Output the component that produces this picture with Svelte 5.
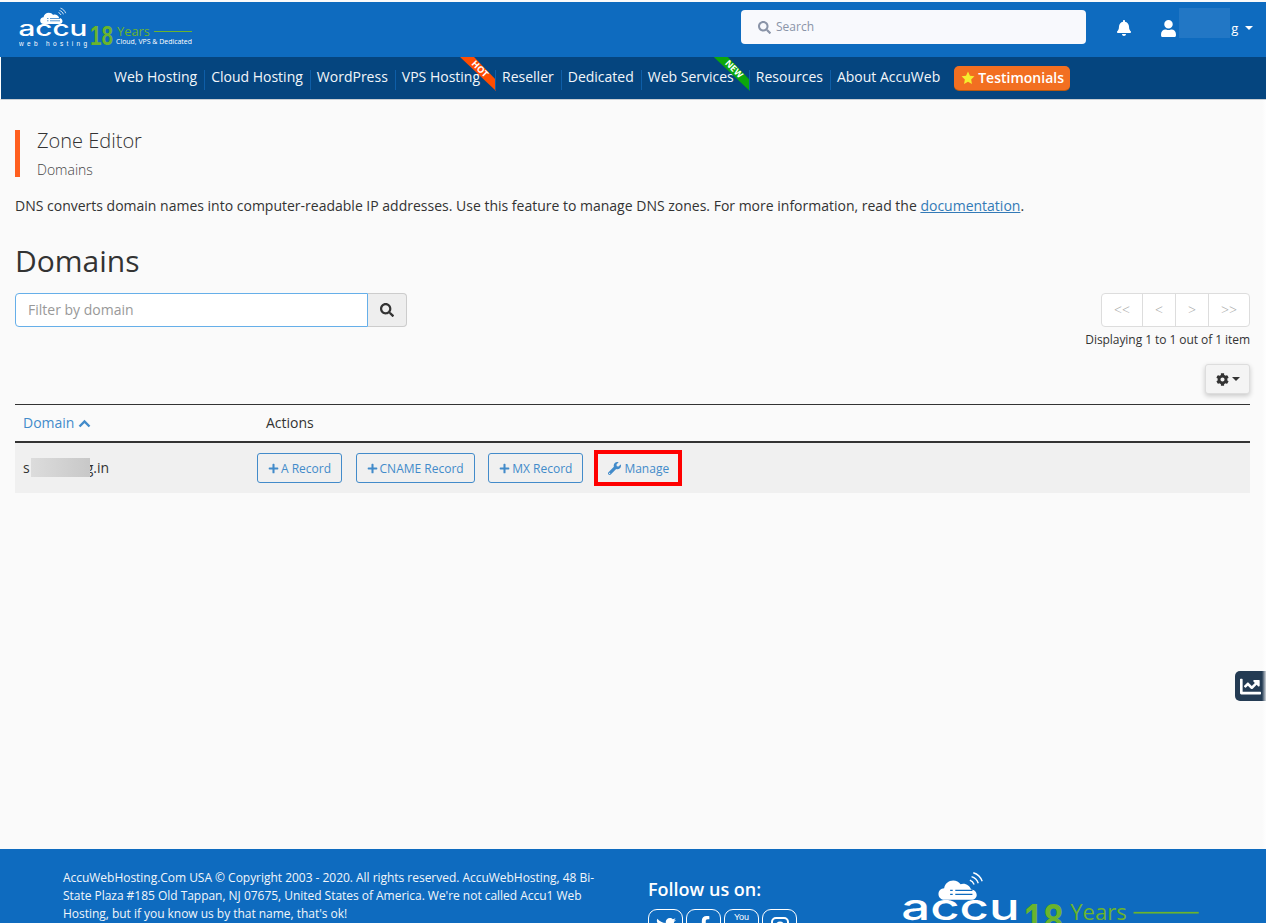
<script>
const navItems = [
	{ label: 'Web Hosting' },
	{ label: 'Cloud Hosting' },
	{ label: 'WordPress' },
	{ label: 'VPS Hosting', ribbon: 'HOT' },
	{ label: 'Reseller' },
	{ label: 'Dedicated' },
	{ label: 'Web Services', ribbon: 'NEW' },
	{ label: 'Resources' },
	{ label: 'About AccuWeb' },
];

const pages = ['<<', '<', '>', '>>'];
const records = ['A Record', 'CNAME Record', 'MX Record'];

const icons = {
	search: ['0 0 512 512', 'M505 442.7L405.3 343c-4.5-4.5-10.6-7-17-7H372c27.6-35.3 44-79.7 44-128C416 93.1 322.9 0 208 0S0 93.1 0 208s93.1 208 208 208c48.3 0 92.7-16.4 128-44v16.3c0 6.4 2.5 12.5 7 17l99.7 99.7c9.4 9.4 24.6 9.4 33.9 0l28.3-28.3c9.4-9.4 9.4-24.6.1-34zM208 336c-70.7 0-128-57.2-128-128 0-70.7 57.2-128 128-128 70.7 0 128 57.2 128 128 0 70.7-57.2 128-128 128z'],
	bell: ['0 0 448 512', 'M224 512c35.32 0 63.97-28.65 63.97-64H160.03c0 35.35 28.65 64 63.97 64zm215.39-149.71c-19.32-20.76-55.47-51.99-55.47-154.29 0-77.7-54.48-139.9-127.94-155.16V32c0-17.67-14.32-32-31.98-32s-31.98 14.33-31.98 32v20.84C118.56 68.1 64.08 130.3 64.08 208c0 102.3-36.15 133.53-55.47 154.29-6 6.45-8.66 14.16-8.61 21.71.11 16.4 12.98 32 32.1 32h383.8c19.12 0 32-15.6 32.1-32 .05-7.55-2.61-15.27-8.61-21.71z'],
	user: ['0 0 448 512', 'M224 256c70.7 0 128-57.3 128-128S294.7 0 224 0 96 57.3 96 128s57.3 128 128 128zm89.6 32h-16.7c-22.2 10.2-46.9 16-72.9 16s-50.6-5.8-72.9-16h-16.7C60.2 288 0 348.2 0 422.4V464c0 26.5 21.5 48 48 48h352c26.5 0 48-21.5 48-48v-41.6c0-74.2-60.2-134.4-134.4-134.4z'],
	star: ['0 0 24 24', 'M12 1l3.4 7.2 7.6 1-5.6 5.4 1.4 7.8L12 18.6l-6.8 3.8 1.4-7.8L1 9.2l7.6-1z'],
	plus: ['0 0 448 512', 'M416 208H272V64c0-17.67-14.33-32-32-32h-32c-17.67 0-32 14.33-32 32v144H32c-17.67 0-32 14.33-32 32v32c0 17.67 14.33 32 32 32h144v144c0 17.67 14.33 32 32 32h32c17.67 0 32-14.33 32-32V304h144c17.67 0 32-14.33 32-32v-32c0-17.67-14.33-32-32-32z'],
	wrench: ['0 0 512 512', 'M507.73 109.1c-2.24-9.03-13.54-12.09-20.12-5.51l-74.36 74.36-67.88-11.31-11.31-67.88 74.36-74.36c6.62-6.62 3.43-17.9-5.66-20.16-47.38-11.74-99.55.91-136.58 37.93-39.64 39.64-50.55 97.1-34.05 147.2L18.74 402.76c-24.99 24.99-24.99 65.51 0 90.5 24.99 24.99 65.51 24.99 90.5 0l213.21-213.21c50.12 16.71 107.47 5.68 147.37-34.22 37.07-37.07 49.7-89.32 37.91-136.73zM64 472c-13.25 0-24-10.75-24-24 0-13.26 10.75-24 24-24s24 10.74 24 24c0 13.25-10.75 24-24 24z'],
	cog: ['0 0 512 512', 'M487.4 315.7l-42.6-24.6c4.3-23.2 4.3-47 0-70.2l42.6-24.6c4.9-2.8 7.1-8.6 5.5-14-11.1-35.6-30-67.8-54.7-94.6-3.8-4.1-10-5.1-14.8-2.3L380.8 110c-17.9-15.4-38.5-27.3-60.8-35.1V25.8c0-5.6-3.9-10.5-9.4-11.7-36.7-8.2-74.3-7.8-109.2 0-5.5 1.2-9.4 6.1-9.4 11.7V75c-22.2 7.9-42.8 19.8-60.8 35.1L88.7 85.5c-4.9-2.8-11-1.9-14.8 2.3-24.7 26.7-43.6 58.9-54.7 94.6-1.7 5.4.6 11.2 5.5 14L67.3 221c-4.3 23.2-4.3 47 0 70.2l-42.6 24.6c-4.9 2.8-7.1 8.6-5.5 14 11.1 35.6 30 67.8 54.7 94.6 3.8 4.1 10 5.1 14.8 2.3l42.6-24.6c17.9 15.4 38.5 27.3 60.8 35.1v49.2c0 5.6 3.9 10.5 9.4 11.7 36.7 8.2 74.3 7.8 109.2 0 5.5-1.2 9.4-6.1 9.4-11.7v-49.2c22.2-7.9 42.8-19.8 60.8-35.1l42.6 24.6c4.9 2.8 11 1.9 14.8-2.3 24.7-26.7 43.6-58.9 54.7-94.6 1.5-5.5-.7-11.3-5.6-14.1zM256 336c-44.1 0-80-35.9-80-80s35.9-80 80-80 80 35.9 80 80-35.9 80-80 80z'],
	chart: ['0 0 512 512', 'M496 384H64V80c0-8.84-7.16-16-16-16H16C7.16 64 0 71.16 0 80v336c0 17.67 14.33 32 32 32h464c8.84 0 16-7.16 16-16v-32c0-8.84-7.16-16-16-16zM464 96H345.94c-21.38 0-32.09 25.85-16.97 40.97l32.4 32.4L288 242.75l-73.37-73.37c-12.5-12.5-32.76-12.5-45.25 0l-68.69 68.69c-6.25 6.25-6.25 16.38 0 22.63l22.62 22.62c6.25 6.25 16.38 6.25 22.63 0L192 237.25l73.37 73.37c12.5 12.5 32.76 12.5 45.25 0l96-96 32.4 32.4c15.12 15.12 40.97 4.41 40.97-16.97V112c.01-8.84-7.15-16-15.99-16z'],
	twitter: ['0 0 512 512', 'M459.37 151.716c.325 4.548.325 9.097.325 13.645 0 138.72-105.583 298.558-298.558 298.558-59.452 0-114.68-17.219-161.137-47.106 8.447.974 16.568 1.299 25.34 1.299 49.055 0 94.213-16.568 130.274-44.832-46.132-.975-84.792-31.188-98.112-72.772 6.498.974 12.995 1.624 19.818 1.624 9.421 0 18.843-1.3 27.614-3.573-48.081-9.747-84.143-51.98-84.143-102.985v-1.299c13.969 7.797 30.214 12.67 47.431 13.319-28.264-18.843-46.781-51.005-46.781-87.391 0-19.492 5.197-37.36 14.294-52.954 51.655 63.675 129.3 105.258 216.365 109.807-1.624-7.797-2.599-15.918-2.599-24.04 0-57.828 46.782-104.934 104.934-104.934 30.213 0 57.502 12.67 76.67 33.137 23.715-4.548 46.456-13.32 66.599-25.34-7.798 24.366-24.366 44.833-46.132 57.827 21.117-2.273 41.584-8.122 60.426-16.243-14.292 20.791-32.161 39.308-52.628 54.253z'],
	facebook: ['0 0 320 512', 'M279.14 288l14.22-92.66h-88.91v-60.13c0-25.35 12.42-50.06 52.24-50.06h40.42V6.26S260.43 0 225.36 0c-73.22 0-121.08 44.38-121.08 124.72v70.62H22.89V288h81.39v224h100.17V288z'],
};
</script>

{#snippet icon(name, size, cls = '')}
	<svg class="ico {cls}" width={size} height={size} viewBox={icons[name][0]} fill="currentColor"><path d={icons[name][1]} /></svg>
{/snippet}

{#snippet logo(width, height)}
	<svg {width} {height} viewBox="0 0 176 42">
		<path d="M25 18c-2.600 0-3.800-1.700-3.800-3.300 0-1.900 1.400-3.300 3.300-3.400 .3-2.800 2.700-4.600 5.300-4.600 1.800 0 3.300 .8 4.300 2.200 .4-.2 1-.3 1.500-.3 2.200 0 4 1.400 4.600 3.400 2 .1 3.300 1.500 3.300 3.200 0 1.400-1.100 2.800-3.100 2.800z" fill="#fff" />
		<path d="M28 12.500h1.500M31 12.500h10M28 14.800h1.500M31 14.800h10" stroke="#0e6bbf" stroke-width=".7" fill="none" />
		<path d="M39.500 6.500c1 .4 2 1.300 2.500 2.500M40.500 4.500c2 .6 3.300 2 3.900 3.800M41.500 2.200c2.600 .8 4.400 2.700 5.200 5" stroke="#fff" stroke-width=".8" fill="none" />
		<text x="-0.500" y="30" textLength="69" lengthAdjust="spacingAndGlyphs" class="accu">accu</text>
		<text x="0" y="39.500" textLength="68" class="web">web hosting</text>
		<text x="71" y="39" textLength="23" lengthAdjust="spacingAndGlyphs" class="eighteen">18</text>
		<text x="98" y="30" textLength="33" lengthAdjust="spacingAndGlyphs" class="years">Years</text>
		<rect x="135" y="25" width="38" height="1" fill="#6ab42d" />
		<text x="97" y="38" textLength="76" lengthAdjust="spacingAndGlyphs" class="tagline">Cloud, VPS &amp; Dedicated</text>
	</svg>
{/snippet}

<div class="page">
	<header class="top">
		<div class="logo-wrap">{@render logo(176, 42)}</div>
		<div class="search">
			{@render icon('search', 13)}
			<span>Search</span>
		</div>
		<span class="bell">{@render icon('bell', 16)}</span>
		<div class="user">
			{@render icon('user', 17)}
			<span class="user-name">s<span class="gap"></span>g</span>
			<span class="caret"></span>
			<span class="user-blur"></span>
		</div>
	</header>

	<nav class="nav">
		{#each navItems as item, i}
			<a class="nav-item" class:ribboned={item.ribbon} class:last={i === navItems.length - 1} href="#top">
				{item.label}
				{#if item.ribbon}
					<span class="ribbon" class:hot={item.ribbon === 'HOT'} class:fresh={item.ribbon === 'NEW'}>
						<b>{item.ribbon}</b>
					</span>
				{/if}
			</a>
		{/each}
		<a class="testimonials" href="#top">{@render icon('star', 14)}Testimonials</a>
	</nav>

	<main class="content">
		<div class="page-title">
			<h2>Zone Editor</h2>
			<p>Domains</p>
		</div>
		<p class="intro">
			DNS converts domain names into computer-readable IP addresses. Use this feature to manage DNS zones. For more information, read the <a href="#top">documentation</a>.
		</p>
		<h1>Domains</h1>

		<div class="toolbar">
			<div class="filter">
				<div class="filter-input">Filter by domain</div>
				<button class="filter-btn">{@render icon('search', 14)}</button>
			</div>
			<div class="paging">
				<div class="pager">
					{#each pages as p}
						<span>{p}</span>
					{/each}
				</div>
				<div class="count">Displaying 1 to 1 out of 1 item</div>
			</div>
		</div>

		<div class="settings-row">
			<button class="settings">{@render icon('cog', 13)}<span class="caret dark"></span></button>
		</div>

		<div class="table">
			<div class="thead">
				<div class="col-domain sort">
					Domain
					<svg width="13" height="9" viewBox="0 0 13 9"><path d="M1.500 7.500l5-5 5 5" fill="none" stroke="currentColor" stroke-width="2.400" /></svg>
				</div>
				<div class="col-actions">Actions</div>
			</div>
			<div class="trow">
				<div class="col-domain cell">s<span class="domain-blur"></span>g.in</div>
				<div class="buttons">
					{#each records as r}
						<button class="rec">{@render icon('plus', 11)}{r}</button>
					{/each}
					<button class="rec manage">{@render icon('wrench', 13)}Manage</button>
				</div>
			</div>
		</div>
	</main>

	<footer class="footer">
		<p class="legal">AccuWebHosting.Com USA © Copyright 2003 - 2020. All rights reserved. AccuWebHosting, 48 Bi-State Plaza #185 Old Tappan, NJ 07675, United States of America. We're not called Accu1 Web Hosting, but if you know us by that name, that's ok!</p>
		<div class="follow">
			<h3>Follow us on:</h3>
			<div class="social">
				<span>{@render icon('twitter', 20)}</span>
				<span>{@render icon('facebook', 20)}</span>
				<span class="yt">You</span>
				<span>
					<svg width="20" height="20" viewBox="0 0 20 20" fill="none" stroke="currentColor" stroke-width="2"><rect x="2" y="2" width="16" height="16" rx="4" /><circle cx="10" cy="10" r="3.500" /></svg>
				</span>
			</div>
		</div>
		<div class="footer-logo">{@render logo(302, 72)}</div>
	</footer>

	<button class="side-tab" aria-label="Stats">{@render icon('chart', 21)}</button>
	<div class="edge"></div>
</div>

<style>
	:global(body) {
		margin: 0;
		overflow: hidden;
		background: #fafafa;
	}

	.page {
		position: relative;
		display: flex;
		flex-direction: column;
		height: 100vh;
		overflow: hidden;
		background: #fafafa;
		color: #333;
		font-family: "Open Sans", sans-serif;
		font-size: 14px;
		line-height: 20px;
	}

	.ico {
		display: inline-block;
		flex: none;
	}

	button {
		font-family: inherit;
		cursor: pointer;
	}

	/* header */
	.top {
		display: flex;
		align-items: center;
		flex: none;
		height: 55px;
		margin-top: 2px;
		background: #0e6bbf;
		color: #fff;
	}

	.logo-wrap {
		display: flex;
		margin-left: 19px;
		margin-top: -6px;
	}

	.accu {
		font: 500 21px Inter, sans-serif;
		fill: #fff;
	}

	.web {
		font: 6.500px "Liberation Sans", sans-serif;
		fill: #fff;
	}

	.eighteen {
		font: bold 27px "Liberation Sans", sans-serif;
		fill: #6ab42d;
	}

	.years {
		font: 12.500px "Open Sans", sans-serif;
		fill: #6ab42d;
	}

	.tagline {
		font: 6.500px "Open Sans", sans-serif;
		fill: #fff;
	}

	.search {
		display: flex;
		align-items: center;
		gap: 5px;
		box-sizing: border-box;
		width: 345px;
		height: 34px;
		margin-left: 546px;
		margin-top: -5px;
		padding-left: 17px;
		border-radius: 4px;
		background: #f8f9fd;
		color: #8a94a8;
		font-size: 12px;
	}

	.bell {
		display: flex;
		margin-left: 30px;
		margin-top: -3px;
	}

	.user {
		position: relative;
		display: flex;
		align-items: center;
		margin-left: 28px;
		margin-top: -3px;
		font-size: 13px;
	}

	.user-name {
		margin-left: 2px;
	}

	.user-name .gap {
		display: inline-block;
		width: 46px;
	}

	.user-blur {
		position: absolute;
		left: 19px;
		top: -10px;
		width: 51px;
		height: 30px;
		background: #2277c5;
	}

	.caret {
		width: 0;
		height: 0;
		margin-left: 7px;
		border-left: 4px solid transparent;
		border-right: 4px solid transparent;
		border-top: 4px solid #fff;
	}

	.caret.dark {
		margin-left: 3px;
		border-top-color: #333;
	}

	/* nav */
	.nav {
		display: flex;
		align-items: center;
		flex: none;
		box-sizing: border-box;
		height: 43px;
		padding-left: 107px;
		padding-bottom: 3px;
		background: #05457f;
		border-left: 1px solid #fff;
		border-bottom: 1px solid #c9ced3;
	}

	.nav-item {
		position: relative;
		display: block;
		padding: 0 8px 0 6px;
		color: #f2f6fa;
		text-decoration: none;
		line-height: 21px;
	}

	/* separator sits lower than the label */
	.nav-item::after {
		content: "";
		position: absolute;
		right: 0;
		top: 4px;
		height: 20px;
		border-right: 1px solid #0e5ea8;
	}

	.nav-item.ribboned {
		padding-right: 16px;
	}

	.nav-item.last::after {
		display: none;
	}

	.ribbon {
		position: absolute;
		top: -9px;
		right: 0;
		width: 36px;
		height: 34px;
		clip-path: polygon(0 0, 14px 0, 36px 23px, 36px 34px);
	}

	.ribbon.hot {
		background: #ff4d00;
	}

	.ribbon.fresh {
		background: #0ca60c;
	}

	.ribbon b {
		position: absolute;
		left: 8px;
		top: 7px;
		width: 24px;
		color: #fff;
		font-size: 9px;
		line-height: 10px;
		text-align: center;
		transform: rotate(45deg);
	}

	.testimonials {
		display: flex;
		align-items: center;
		gap: 3px;
		box-sizing: border-box;
		width: 116px;
		height: 24px;
		margin-left: 6px;
		margin-top: 2px;
		padding-left: 7px;
		border-radius: 5px;
		background: #f26f21;
		box-shadow: 0 1px 0 #b9590f;
		color: #fff;
		font-weight: 600;
		text-decoration: none;
	}

	.testimonials .ico {
		color: #f5ee2e;
	}

	/* content */
	.content {
		flex: 1;
		padding: 30px 16px 0 15px;
	}

	.page-title {
		box-sizing: border-box;
		height: 47px;
		padding-left: 17px;
		border-left: 5px solid #ff5f1f;
	}

	.page-title h2 {
		margin: 0;
		font-size: 20px;
		font-weight: 300;
		line-height: 22px;
	}

	.page-title p {
		margin: 9px 0 0;
		font-weight: 300;
		line-height: 18px;
		color: #444;
	}

	.intro {
		margin: 19px 0 0;
	}

	.intro a {
		color: #337ab7;
	}

	h1 {
		margin: 28px 0 0;
		font-size: 30px;
		font-weight: 400;
		line-height: 33px;
	}

	.toolbar {
		display: flex;
		justify-content: space-between;
		align-items: flex-start;
		margin-top: 16px;
	}

	.filter {
		display: flex;
		height: 34px;
	}

	.filter-input {
		box-sizing: border-box;
		width: 353px;
		padding: 6px 12px;
		border: 1px solid #66afe9;
		border-radius: 4px 0 0 4px;
		background: #fff;
		color: #999;
	}

	.filter-btn {
		display: flex;
		align-items: center;
		justify-content: center;
		box-sizing: border-box;
		width: 39px;
		padding: 0;
		border: 1px solid #ccc;
		border-left: 0;
		border-radius: 0 4px 4px 0;
		background: #eee;
		color: #333;
	}

	.paging {
		display: flex;
		flex-direction: column;
		align-items: flex-end;
	}

	.pager {
		display: flex;
		height: 34px;
		border: 1px solid #ddd;
		border-radius: 4px;
		box-sizing: border-box;
		background: #fff;
	}

	.pager span {
		display: flex;
		align-items: center;
		justify-content: center;
		width: 32px;
		border-left: 1px solid #ddd;
		color: #aaa;
		font-size: 14px;
		font-weight: 300;
	}

	.pager span:first-child,
	.pager span:last-child {
		width: 40px;
	}

	.pager span:first-child {
		border-left: 0;
	}

	.count {
		margin-top: 3px;
		font-size: 12px;
		line-height: 20px;
		letter-spacing: -0.06px;
	}

	.settings-row {
		display: flex;
		justify-content: flex-end;
		margin-top: 14px;
	}

	.settings {
		display: flex;
		align-items: center;
		justify-content: center;
		box-sizing: border-box;
		width: 45px;
		height: 30px;
		padding: 0;
		border: 1px solid #ddd;
		border-radius: 3px;
		background: #f4f4f4;
		box-shadow: 0 2px 5px rgba(0, 0, 0, 0.2);
		color: #333;
	}

	.table {
		margin-top: 10px;
		border-top: 1px solid #333;
	}

	.thead {
		display: flex;
		align-items: center;
		height: 36px;
		border-bottom: 2px solid #333;
	}

	.col-domain {
		box-sizing: border-box;
		width: 251px;
		padding-left: 8px;
	}

	.sort {
		color: #428bca;
	}

	.col-actions {
		color: #333;
	}

	.trow {
		display: flex;
		align-items: center;
		height: 50px;
		background: #f0f0f0;
	}

	.cell {
		width: 242px;
	}

	.domain-blur {
		position: relative;
		display: inline-block;
		width: 59px;
		height: 19px;
		margin-left: 1px;
		margin-right: -4px;
		vertical-align: -4px;
		background: linear-gradient(90deg, #dcdcdc, #d2d2d2 50%, #c8c8c8);
	}

	.buttons {
		display: flex;
		align-items: center;
		gap: 13.500px;
	}

	.rec {
		display: flex;
		align-items: center;
		gap: 2px;
		box-sizing: border-box;
		height: 30px;
		padding: 0 10px;
		border: 1px solid #428bca;
		border-radius: 3px;
		background: transparent;
		color: #428bca;
		font-size: 12px;
	}

	.manage {
		gap: 3px;
		height: 36px;
		margin-left: -2.500px;
		padding: 0 9px 0 10px;
		border: 4px solid #f00;
		border-radius: 0;
	}

	/* footer */
	.footer {
		display: flex;
		flex: none;
		box-sizing: border-box;
		height: 74px;
		overflow: hidden;
		background: #0e6bbf;
		color: #f2f6fa;
	}

	.legal {
		flex: none;
		width: 545px;
		margin: 20px 0 0 63px;
		font-size: 12px;
		line-height: 18px;
		letter-spacing: -0.03px;
	}

	.follow {
		flex: none;
		margin: 27px 0 0 40px;
		width: 255px;
	}

	.follow h3 {
		margin: 0;
		font-size: 18px;
		font-weight: 600;
		line-height: 26px;
		color: #fff;
	}

	.social {
		display: flex;
		gap: 3px;
		margin-top: 7px;
	}

	.social span {
		display: flex;
		align-items: flex-start;
		justify-content: center;
		box-sizing: border-box;
		width: 35px;
		height: 35px;
		padding-top: 6px;
		border: 1px solid #fff;
		border-radius: 9px;
		color: #fff;
	}

	.social .yt {
		padding-top: 2px;
		font: 9px/10px "Liberation Sans Narrow", "Liberation Sans", sans-serif;
	}

	.footer-logo {
		flex: none;
		margin-top: 20px;
		margin-left: -1px;
	}

	.side-tab {
		position: absolute;
		right: 0;
		top: 671px;
		display: flex;
		align-items: center;
		justify-content: center;
		width: 31px;
		height: 30px;
		padding: 0;
		border: 0;
		border-radius: 5px 0 0 5px;
		background: #243b53;
		color: #fff;
	}

	.edge {
		position: absolute;
		top: 100px;
		right: 0;
		bottom: 74px;
		width: 4px;
		background: linear-gradient(90deg, rgba(0, 0, 0, 0), rgba(255, 255, 255, 0.8));
		pointer-events: none;
	}
</style>
